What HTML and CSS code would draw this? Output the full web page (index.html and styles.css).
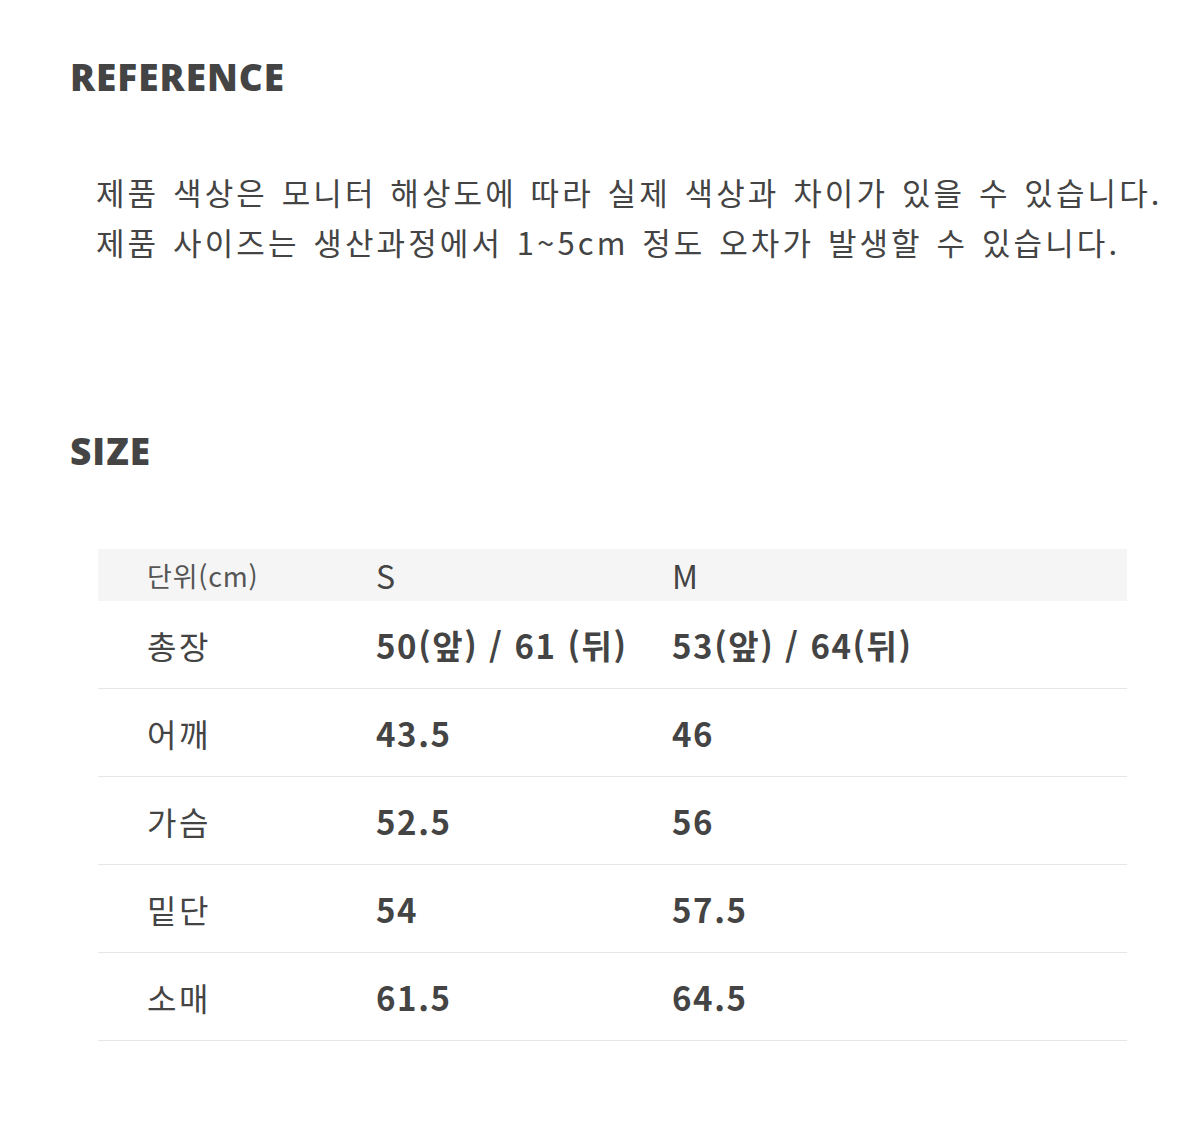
FILE: index.html
```html
<!DOCTYPE html>
<html lang="ko">
<head>
<meta charset="utf-8">
<link rel="stylesheet" href="styles.css">
</head>
<body>
<div class="page">
  <h2 class="title title-ref">REFERENCE</h2>
  <div class="notice">
    <p>제품 색상은 모니터 해상도에 따라 실제 색상과 차이가 있을 수 있습니다.</p>
    <p>제품 사이즈는 생산과정에서 1~5cm 정도 오차가 발생할 수 있습니다.</p>
  </div>
  <h2 class="title title-size">SIZE</h2>
  <div class="table">
    <div class="row head">
      <div class="c1 unit">단위(cm)</div>
      <div class="c2">S</div>
      <div class="c3">M</div>
    </div>
    <div class="row">
      <div class="c1">총장</div>
      <div class="c2 val">50(앞) / 61 (뒤)</div>
      <div class="c3 val">53(앞) / 64(뒤)</div>
    </div>
    <div class="row">
      <div class="c1">어깨</div>
      <div class="c2 val">43.5</div>
      <div class="c3 val">46</div>
    </div>
    <div class="row">
      <div class="c1">가슴</div>
      <div class="c2 val">52.5</div>
      <div class="c3 val">56</div>
    </div>
    <div class="row">
      <div class="c1">밑단</div>
      <div class="c2 val">54</div>
      <div class="c3 val">57.5</div>
    </div>
    <div class="row">
      <div class="c1">소매</div>
      <div class="c2 val">61.5</div>
      <div class="c3 val">64.5</div>
    </div>
  </div>
</div>
</body>
</html>
```

FILE: styles.css
```css
html, body {
  margin: 0;
  padding: 0;
  background: #ffffff;
}
body {
  font-family: "Noto Sans CJK KR", "Noto Sans", sans-serif;
  color: #444444;
}
.page {
  width: 1200px;
  height: 1144px;
  position: relative;
  overflow: hidden;
}
.title {
  margin: 0;
  font-family: "Open Sans", "Noto Sans", sans-serif;
  font-weight: 800;
  font-size: 37px;
  line-height: 40px;
  color: #444444;
  padding-left: 70px;
  letter-spacing: 1px;
}
.title-ref {
  padding-top: 57px;
}
.notice {
  padding-left: 96px;
  padding-top: 70px;
  font-size: 31px;
  line-height: 50px;
  color: #444444;
  letter-spacing: 3.1px;
  word-spacing: 2px;
}
.notice p {
  margin: 0;
  white-space: nowrap;
}
.title-size {
  padding-top: 164px;
}
.table {
  margin-left: 98px;
  width: 1029px;
  margin-top: 78px;
}
.row {
  display: grid;
  grid-template-columns: 278px 296px 1fr;
  align-items: center;
  height: 87px;
  border-bottom: 1px solid #e6e6e6;
  font-size: 32px;
  color: #444444;
}
.row.head {
  height: 52px;
  background: #f5f5f5;
  border-bottom: none;
}
.c1 {
  padding-left: 49px;
  letter-spacing: 2.5px;
}
.unit {
  font-size: 27px;
  color: #555555;
  letter-spacing: 0.8px;
}
.head .c2, .head .c3 {
  font-size: 32px;
  color: #444444;
}
.val {
  font-size: 33px;
  font-weight: 700;
  letter-spacing: 1.6px;
}
```
